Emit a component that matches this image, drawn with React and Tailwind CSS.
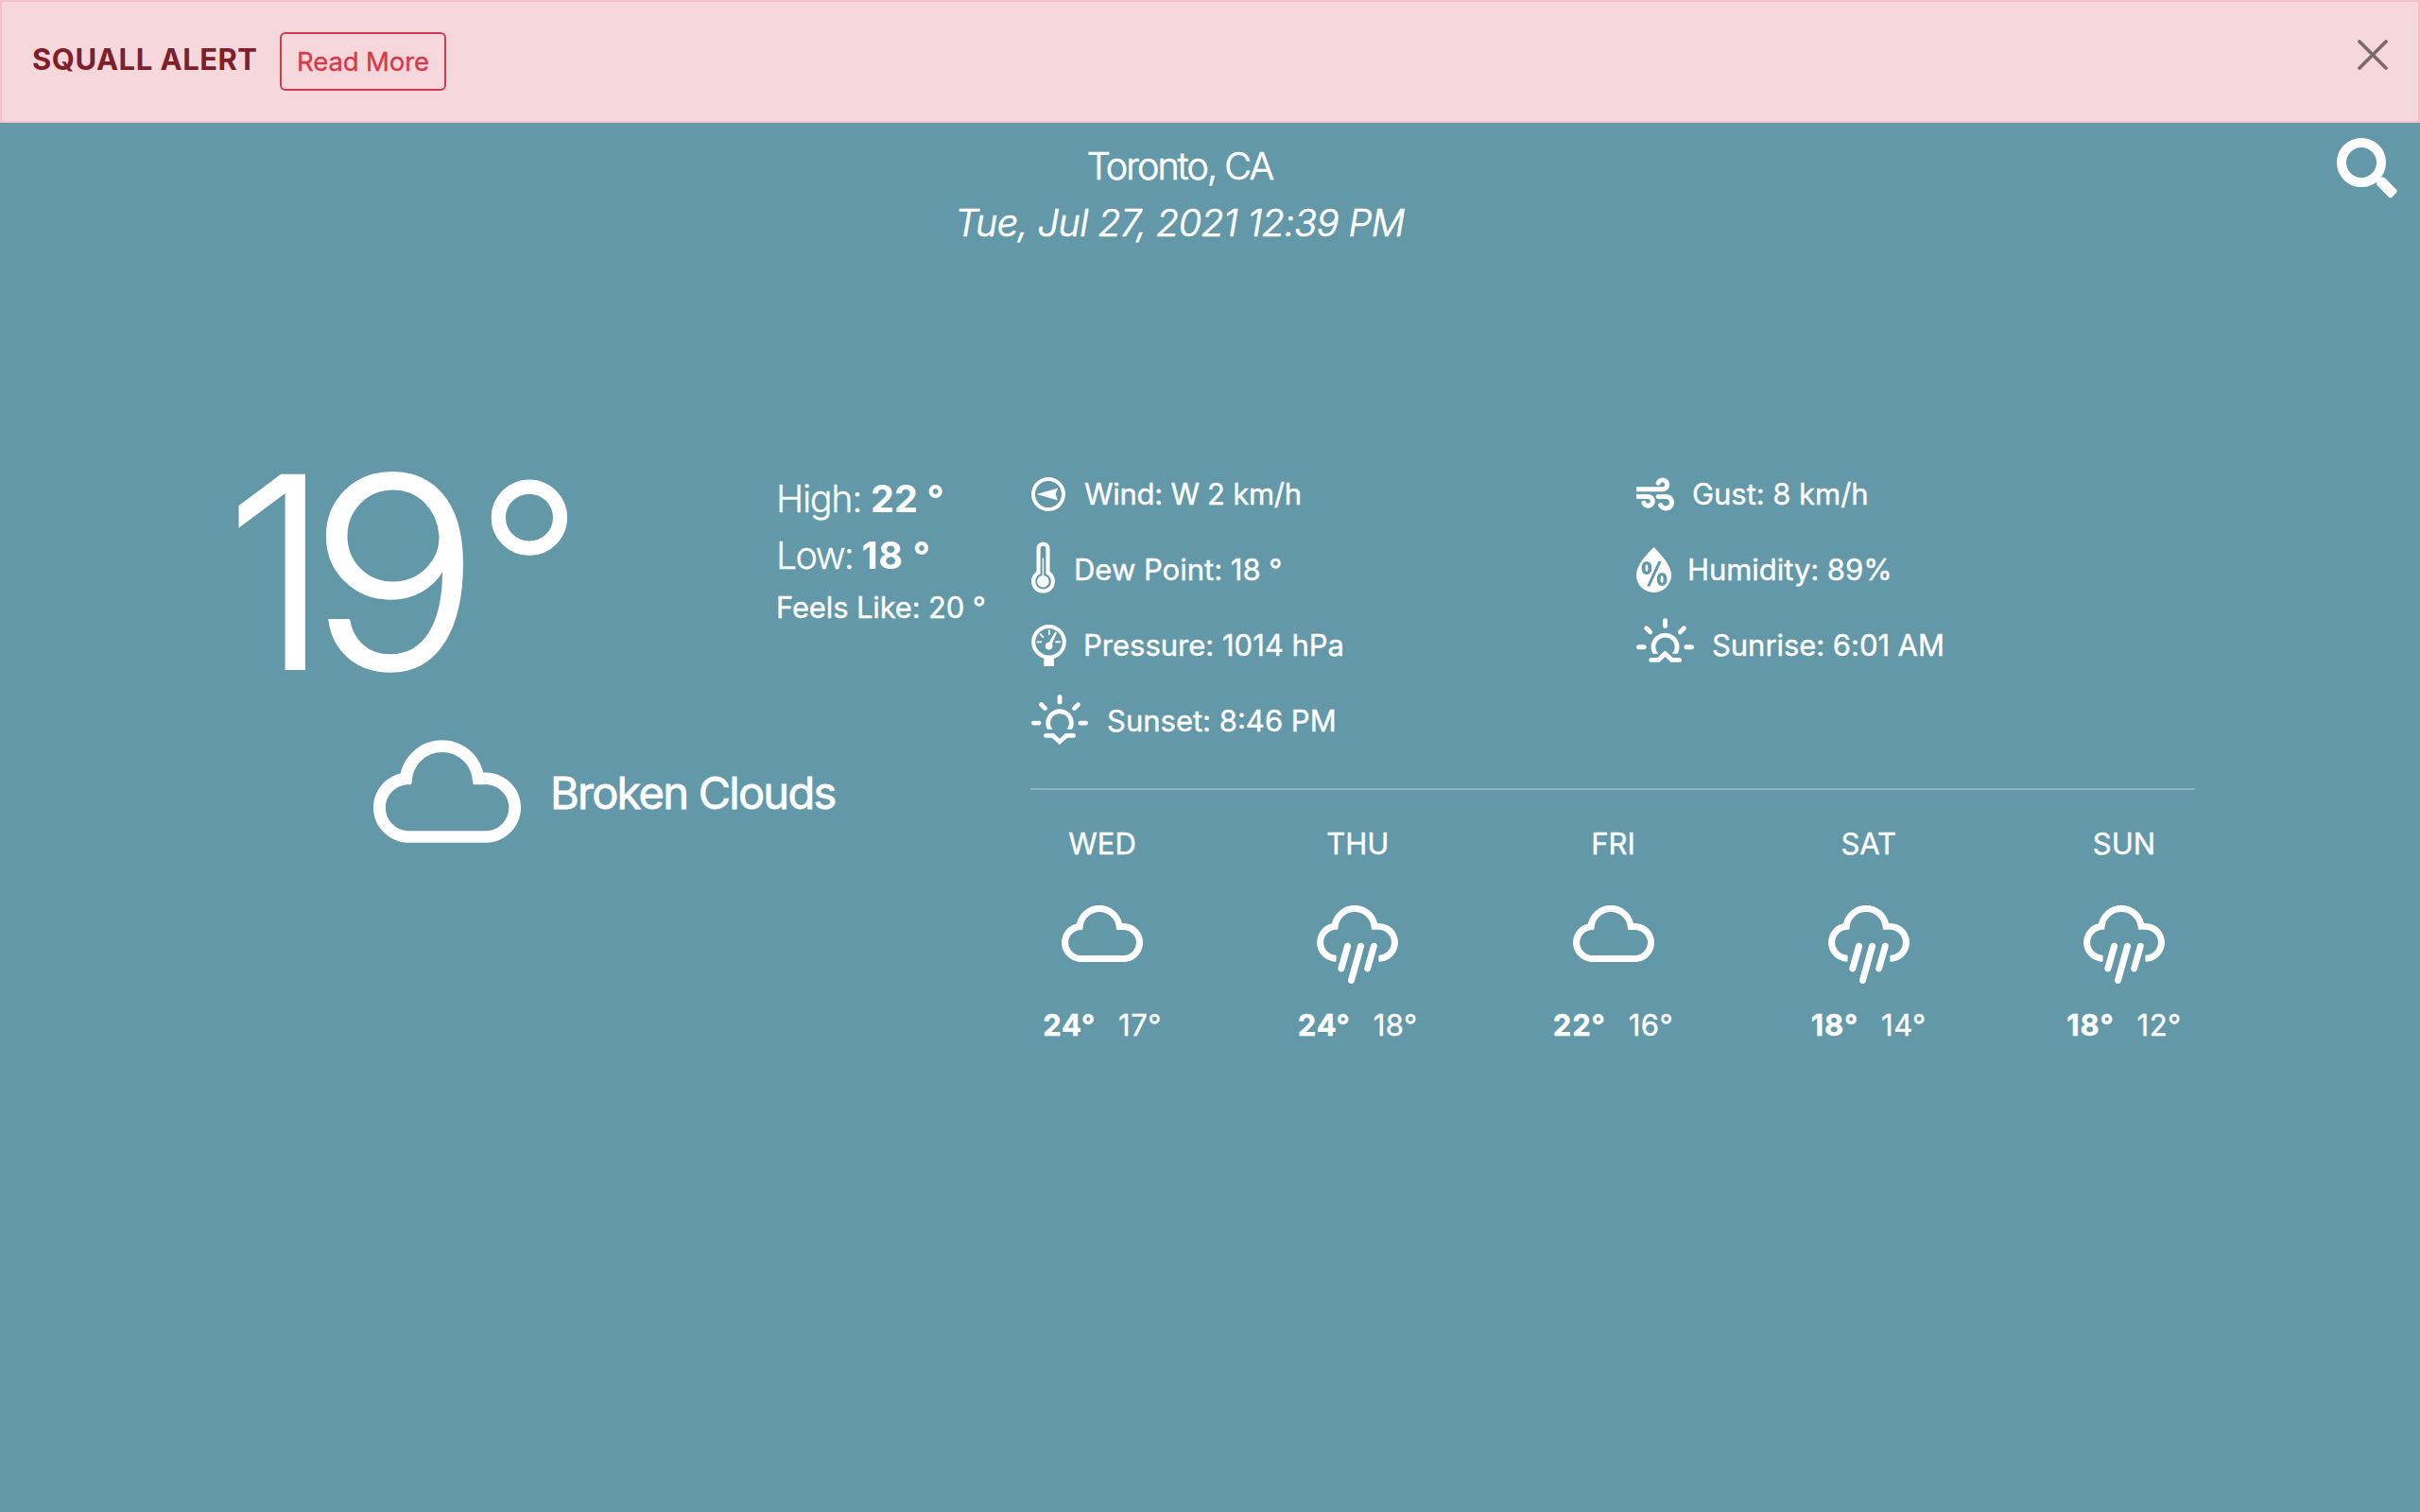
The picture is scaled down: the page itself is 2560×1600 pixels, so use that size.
import {
  WiBarometer,
  WiCloud,
  WiHumidity,
  WiRain,
  WiSunrise,
  WiSunset,
  WiThermometer,
  WiWindDeg,
} from "react-icons/wi";

function CloseIcon({ className }) {
  return (
    <svg viewBox="0 0 32 32" className={className}>
      <path
        d="M2 2l28 28M30 2L2 30"
        fill="none"
        stroke="currentColor"
        strokeWidth="3.8"
        strokeLinecap="round"
      />
    </svg>
  );
}

function GustIcon({ className }) {
  return (
    <svg
      viewBox="0 0 40 36"
      fill="none"
      stroke="currentColor"
      strokeWidth="5"
      strokeLinecap="round"
      className={className}
    >
      <path strokeLinecap="butt" d="M0 12.7h27.8" />
      <path d="M27.5 12.7a4.9 4.9 0 1 0-4.3-6.6" />
      <path strokeLinecap="butt" d="M0 20.4h12.5" />
      <path d="M12.3 20.4a4.9 4.9 0 1 1-4.4 6.8" />
      <path d="M23.2 20.4h7.8a6.3 6.3 0 1 1-5.4 9.2" />
    </svg>
  );
}

function SearchIcon({ className }) {
  return (
    <svg viewBox="0 0 64 64" className={className}>
      <circle cx="26" cy="26" r="21" fill="none" stroke="currentColor" strokeWidth="10" />
      <path
        fill="currentColor"
        d="M42 47.5v-3q0-3 3-3h3.500q1.500 0 2.600 1.100l11.800 12q1.600 1.700 0 3.300l-4.500 4.900q-1.700 1.600-3.300 0l-12-12.200q-1.100-1.200-1.100-3.100z"
      />
    </svg>
  );
}

const details = [
  {
    icon: <WiWindDeg viewBox="3.74 3.22 22.52 22.52" className="h-9 w-9 -rotate-90" />,
    text: "Wind: W 2 km/h",
    className: "gap-5 tracking-[-0.27px]",
  },
  {
    icon: <GustIcon className="h-9 w-10" />,
    text: "Gust: 8 km/h",
    className: "gap-[19px] tracking-[-0.05px]",
  },
  {
    icon: <WiThermometer viewBox="9.91 2.55 10.18 22.09" className="mb-1.5 h-[55px] w-[25px]" />,
    text: "Dew Point: 18 °",
    className: "gap-5",
  },
  {
    icon: <WiHumidity viewBox="7.56 5.46 14.82 19.13" className="h-12 w-[37px]" />,
    text: "Humidity: 89%",
    className: "gap-[17px] tracking-[-0.05px]",
  },
  {
    icon: <WiBarometer viewBox="7.69 5.88 14.65 17.56" className="h-11 w-[37px]" />,
    text: "Pressure: 1014 hPa",
    className: "gap-[18px]",
  },
  {
    icon: <WiSunrise viewBox="2.75 3.11 24.5 18.76" className="mb-3 h-[47px] w-[61px]" />,
    text: "Sunrise: 6:01 AM",
    className: "gap-[19px] tracking-[-0.05px]",
  },
  {
    icon: <WiSunset viewBox="2.88 3.35 24.25 21.42" className="mb-1 h-[53px] w-[60px]" />,
    text: "Sunset: 8:46 PM",
    className: "gap-5",
  },
];

const days = [
  { name: "WED", rain: false, high: "24°", low: "17°" },
  { name: "THU", rain: true, high: "24°", low: "18°" },
  { name: "FRI", rain: false, high: "22°", low: "16°" },
  { name: "SAT", rain: true, high: "18°", low: "14°" },
  { name: "SUN", rain: true, high: "18°", low: "12°" },
];

function Alert() {
  return (
    <div className="flex h-[130px] items-start border-2 border-[#f4c3c9] bg-[#f6d7dc] pl-8">
      <strong className="mt-9 w-[262px] text-[31px] leading-[50px] font-bold tracking-[0.5px] whitespace-nowrap text-[#7f1f2a]">
        SQUALL ALERT
      </strong>
      <button className="mt-8 h-[62px] w-44 rounded-md border-2 border-[#d03b4c] text-[27.5px] leading-[58px] tracking-[-0.1px] text-[#d63b4b] [-webkit-text-stroke:0.4px]">
        Read More
      </button>
      <CloseIcon className="mt-10 mr-8 ml-auto h-8 w-8 text-[#7b6b6e]" />
    </div>
  );
}

function Header() {
  return (
    <header className="flex pr-6">
      <div className="flex-1 pt-4 pl-6 text-center text-[39.5px] leading-[60px] font-light [-webkit-text-stroke:0.7px]">
        <h1 className="tracking-[-1.9px]">Toronto, CA</h1>
        <p className="tracking-[-0.55px] italic">Tue, Jul 27, 2021 12:39 PM</p>
      </div>
      <SearchIcon className="mt-4 h-16 w-16" />
    </header>
  );
}

function Current() {
  return (
    <section className="w-[1090px] pt-[7px]">
      <div className="flex h-[231px] items-start pl-[238px]">
        <span className="w-[265px] text-[282px] leading-[231px] font-light tracking-[-17px] whitespace-nowrap [-webkit-text-stroke:2px]">
          1<span className="inline-block scale-x-[1.07]">9</span>
        </span>
        <span className="w-[318px] text-[250px] leading-[222px] font-light [-webkit-text-stroke:1px]">
          °
        </span>
        <div className="mt-2 text-[39.5px] leading-[60px] font-light whitespace-nowrap">
          <p>
            <span className="tracking-[-1.3px] [-webkit-text-stroke:0.3px]">High: </span>
            <b className="font-bold tracking-[0.1px]">22 °</b>
          </p>
          <p>
            <span className="tracking-[-1.8px] [-webkit-text-stroke:0.3px]">Low: </span>
            <b className="font-bold tracking-[0.7px]">18 °</b>
          </p>
          <p className="text-[31px] leading-[50px] font-normal tracking-[-0.15px] [-webkit-text-stroke:0.4px]">
            Feels Like: 20 °
          </p>
        </div>
      </div>
      <div className="mt-[62px] flex items-center gap-[31px] pl-[395px]">
        <WiCloud viewBox="4.61 7.39 20.78 14.46" className="h-[109px] w-[156px]" />
        <span className="pt-1 text-[47px] tracking-[-1.75px] [-webkit-text-stroke:0.8px]">
          Broken Clouds
        </span>
      </div>
    </section>
  );
}

function Forecast() {
  return (
    <div className="-mr-px flex justify-between pt-[33px] text-[31px] leading-[48px] [-webkit-text-stroke:0.4px]">
      {days.map((day) => (
        <div key={day.name} className="flex w-[152px] flex-col items-center">
          <span>{day.name}</span>
          <div className="mt-[41px] h-[83px]">
            {day.rain ? (
              <WiRain viewBox="4.64 7.44 20.73 20.06" className="h-[83px] w-[86px]" />
            ) : (
              <WiCloud viewBox="4.61 7.39 20.78 14.46" className="h-[60px] w-[86px]" />
            )}
          </div>
          <div className="mt-5 flex gap-6 whitespace-nowrap">
            <b className="font-bold tracking-[0.9px]">{day.high}</b>
            <span className="tracking-[0.5px]">{day.low}</span>
          </div>
        </div>
      ))}
    </div>
  );
}

export default function App() {
  return (
    <div className="min-h-screen bg-[#6398a8] font-[Inter,sans-serif] text-white">
      <Alert />
      <Header />
      <main className="flex pt-[217px]">
        <Current />
        <section className="w-[1232px]">
          <ul className="grid grid-cols-[640px_1fr] pl-px text-[31px]">
            {details.map((item) => (
              <li key={item.text} className={`flex h-20 items-center ${item.className}`}>
                {item.icon}
                <span className="[-webkit-text-stroke:0.4px]">{item.text}</span>
              </li>
            ))}
          </ul>
          <hr className="mt-[31px] h-0.5 border-0 bg-white/25" />
          <Forecast />
        </section>
      </main>
    </div>
  );
}
